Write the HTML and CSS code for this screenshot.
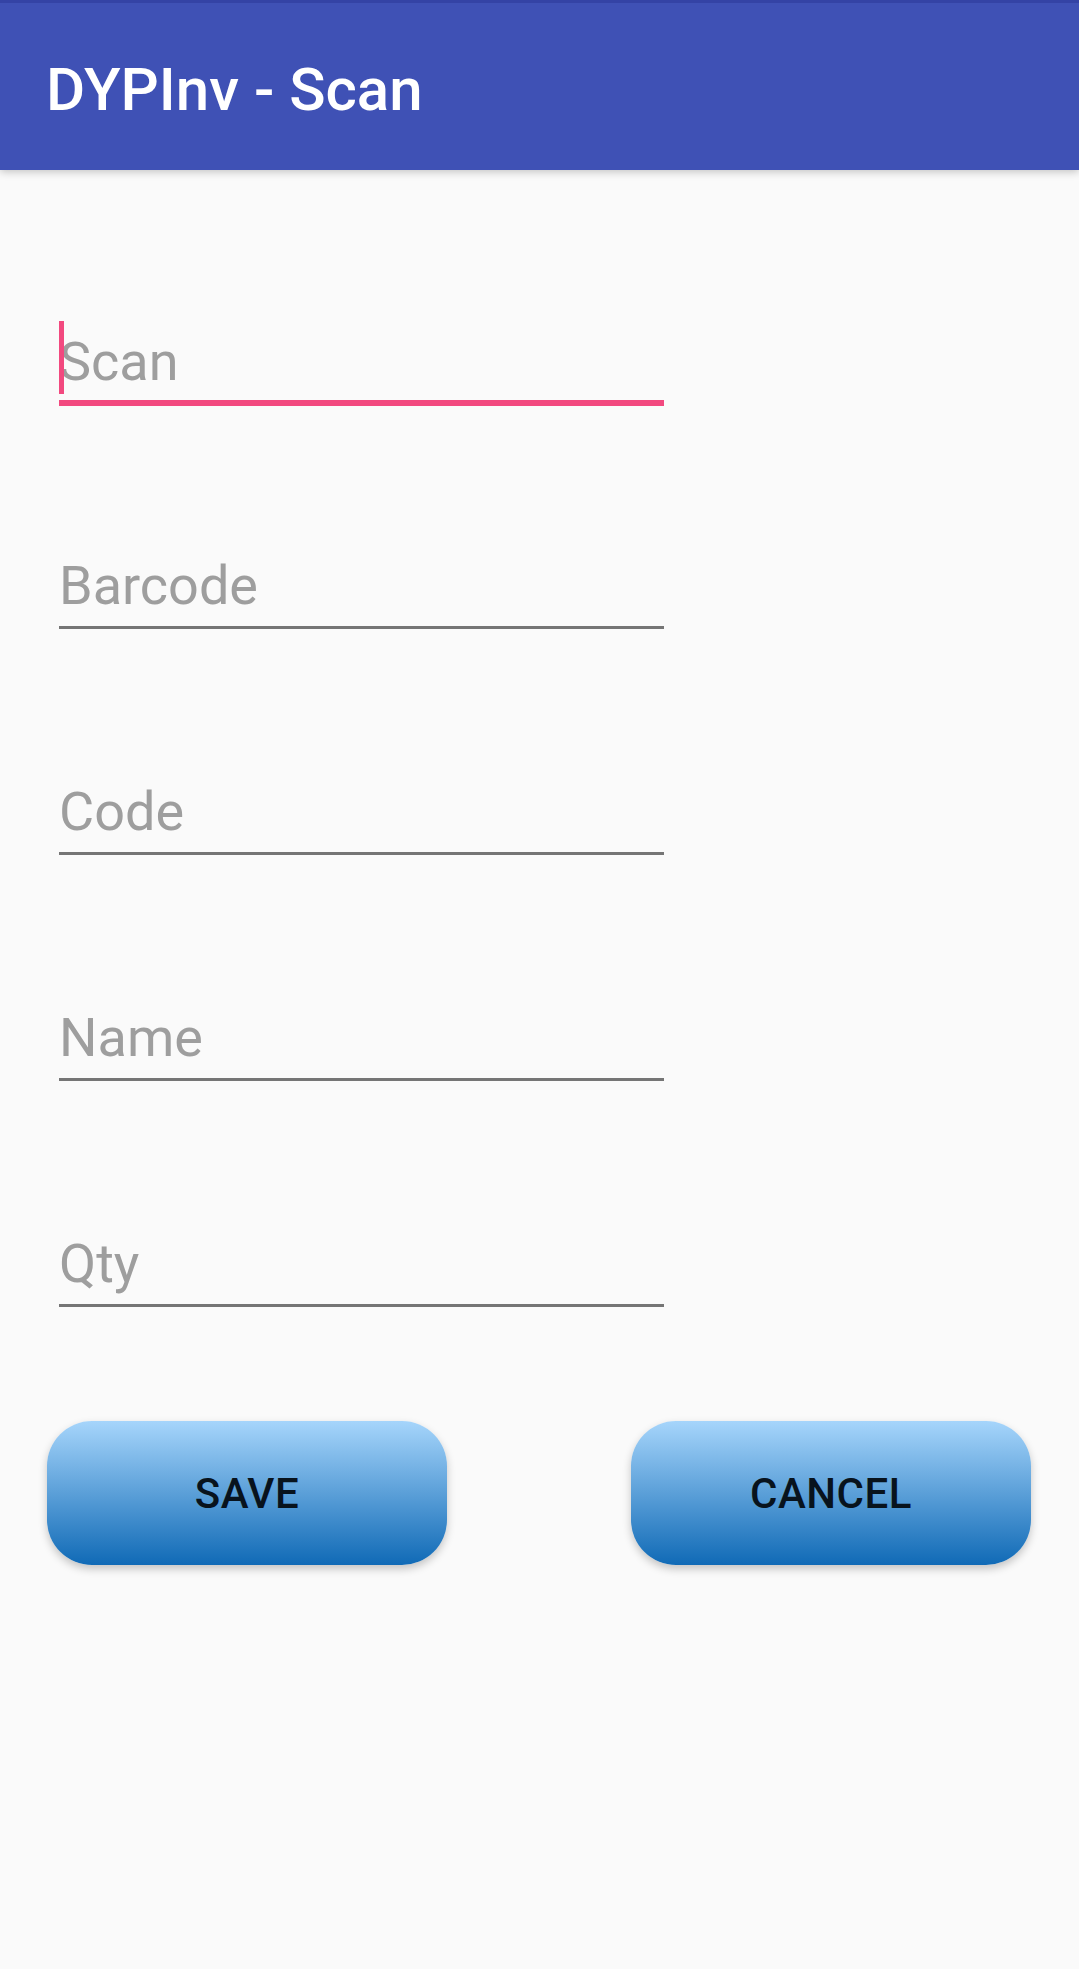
FILE: index.html
```html
<!DOCTYPE html>
<html lang="en">
<head>
  <meta charset="UTF-8">
  <meta name="viewport" content="width=device-width, initial-scale=1">
  <title>DYPInv - Scan</title>
  <link rel="stylesheet" href="styles.css">
</head>
<body>
  <header class="toolbar">
    <h1>DYPInv - Scan</h1>
  </header>

  <main class="content">
    <div class="field focused">
      <span class="cursor"></span>
      <span class="hint">Scan</span>
    </div>
    <div class="field">
      <span class="hint">Barcode</span>
    </div>
    <div class="field">
      <span class="hint">Code</span>
    </div>
    <div class="field">
      <span class="hint">Name</span>
    </div>
    <div class="field">
      <span class="hint">Qty</span>
    </div>

    <div class="actions">
      <button class="btn">SAVE</button>
      <button class="btn">CANCEL</button>
    </div>
  </main>
</body>
</html>
```

FILE: styles.css
```css
body {
  margin: 0;
  padding: 0;
  background: #fafafa;
  font-family: Roboto, "Liberation Sans", sans-serif;
  min-height: 1969px;
}
.toolbar {
  height: 115px;
  padding: 52px 0 0 46px;
  background: #3f51b5;
  border-top: 3px solid #3443a5;
  box-shadow: 0 2px 8px rgba(0, 0, 0, 0.22);
  position: relative;
}
.toolbar h1 {
  margin: 0;
  font-size: 60px;
  line-height: 70px;
  font-weight: 500;
  color: #fff;
}
.content {
  padding-top: 160px;
}
.field {
  position: relative;
  margin: 0 0 151px 59px;
  width: 605px;
  height: 64px;
  padding-bottom: 8px;
  border-bottom: 3px solid #757575;
}
.field.focused {
  padding-bottom: 6px;
  border-bottom: 6px solid #f2497f;
  margin-bottom: 148px;
}
.hint {
  display: block;
  font-size: 54px;
  line-height: 64px;
  color: #9e9e9e;
}
/* text cursor sits over the hint */
.cursor {
  position: absolute;
  left: 0;
  top: -9px;
  width: 5px;
  height: 73px;
  background: #f2497f;
}
.actions {
  display: flex;
  justify-content: space-between;
  margin: -37px 48px 0 47px;
}
.btn {
  width: 400px;
  height: 144px;
  border: none;
  border-radius: 45px;
  background: linear-gradient(to bottom, #a6d5fb, #106ab6);
  box-shadow: 0 4px 8px rgba(0, 0, 0, 0.22);
  font-family: Roboto, "Liberation Sans", sans-serif;
  font-size: 42px;
  font-weight: 500;
  letter-spacing: 0.5px;
  color: #08131d;
  cursor: pointer;
}
```
